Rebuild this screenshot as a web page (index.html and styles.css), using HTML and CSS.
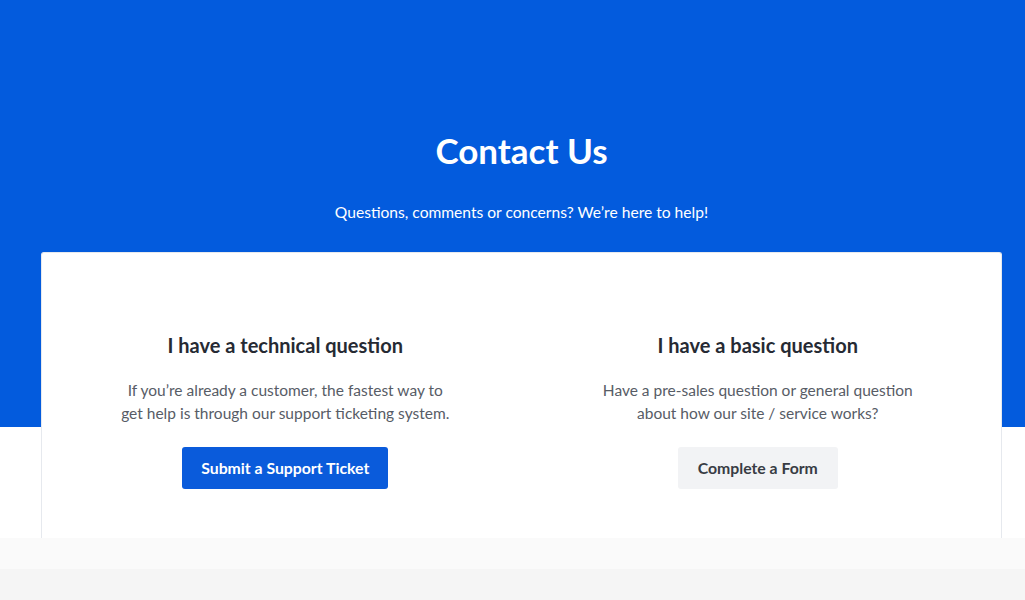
FILE: index.html
```html
<!DOCTYPE html>
<html lang="en">
<head>
    <meta charset="UTF-8">
    <meta name="viewport" content="width=device-width, initial-scale=1.0">
    <title>Contact Us</title>
    <link rel="stylesheet" href="styles.css">
</head>
<body>
    <div class="hero">
        <h1>Contact Us</h1>
        <p>Questions, comments or concerns? We’re here to help!</p>
    </div>

    <div class="page">
        <div class="card">
            <div class="option">
                <h2>I have a technical question</h2>
                <p>If you’re already a customer, the fastest way to<br>get help is through our support ticketing system.</p>
                <a href="#" class="btn btn-primary">Submit a Support Ticket</a>
            </div>
            <div class="option">
                <h2>I have a basic question</h2>
                <p>Have a pre-sales question or general question<br>about how our site / service works?</p>
                <a href="#" class="btn btn-light">Complete a Form</a>
            </div>
        </div>
    </div>

    <div class="strip"></div>
    <div class="footer"></div>
</body>
</html>
```

FILE: styles.css
```css
body {
    font-family: Lato, "Open Sans", Arial, sans-serif;
    color: #2a2f3a;
    background-color: #f5f5f5;
    margin: 0;
    padding: 0;
}
.hero {
    background-color: #035bdd;
    color: #ffffff;
    text-align: center;
    padding: 128px 0 203px 18px;
}
.hero h1 {
    margin: 0;
    font-size: 35px;
    font-weight: 700;
    line-height: 44px;
}
.hero p {
    margin: 28px 0 0;
    font-size: 15.6px;
    line-height: 24px;
}
.page {
    display: flow-root;
    background-color: #ffffff;
    padding: 0 23px 0 41px;
}
.card {
    box-sizing: border-box;
    max-width: 961px;
    margin-top: -175px;
    background: #ffffff;
    border: 1px solid #e6e9ee;
    border-bottom: none;
    border-radius: 3px 3px 0 0;
    padding: 80px 7px 49px;
    display: grid;
    grid-template-columns: 1fr 1fr;
}
.option {
    text-align: center;
}
.option h2 {
    margin: 0;
    font-size: 20px;
    font-weight: 700;
    line-height: 24px;
    color: #262a33;
}
.option p {
    margin: 22px 0 0;
    font-size: 15.5px;
    line-height: 23px;
    color: #575c66;
}
.btn {
    display: inline-block;
    margin-top: 22px;
    height: 42px;
    line-height: 42px;
    padding: 0 19px;
    border-radius: 3px;
    font-size: 15.8px;
    font-weight: 700;
    text-decoration: none;
}
.btn-primary {
    background-color: #0a5bdb;
    color: #ffffff;
}
.btn-light {
    background-color: #f2f3f5;
    color: #383c44;
    padding: 0 20px;
}
.strip {
    height: 31px;
    background-color: #fafafa;
}
.footer {
    height: 40px;
    background-color: #f5f5f5;
}
```
